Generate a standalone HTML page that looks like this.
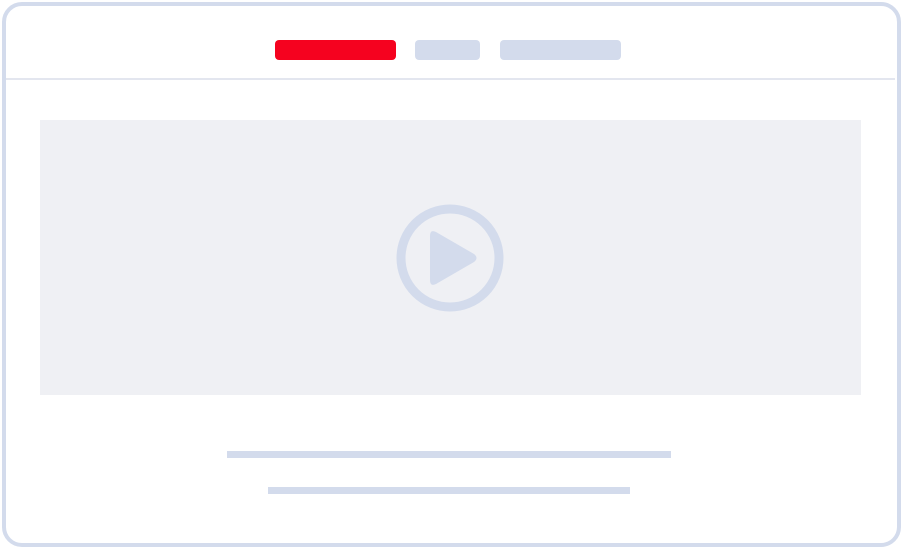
<!DOCTYPE html>
<html><head><meta charset="utf-8"><style>
html,body{margin:0;padding:0;background:#fff;}
body{width:901px;height:545px;position:relative;overflow:hidden;}
.frame{position:absolute;left:2px;top:2px;width:891px;height:537px;border:4px solid #d3dbec;border-radius:20px;background:#fff;}
.line{position:absolute;left:6px;right:6px;top:78px;height:2px;background:#e3e6ef;}
.b{position:absolute;border-radius:4px;}
.video{position:absolute;left:40px;top:120px;width:821px;height:275px;background:#eff0f4;}
.bar{position:absolute;height:7px;background:#d3dbec;}
</style></head><body>
<div class="frame"></div>
<div class="line"></div>
<div class="b" style="left:275px;top:40px;width:121px;height:20px;background:#f5021f;"></div>
<div class="b" style="left:415px;top:40px;width:65px;height:20px;background:#d3dbec;"></div>
<div class="b" style="left:500px;top:40px;width:121px;height:20px;background:#d3dbec;"></div>
<div class="video"></div>
<svg style="position:absolute;left:0;top:0" width="901" height="545">
<circle cx="450" cy="258" r="49" fill="none" stroke="#d3dbec" stroke-width="9"/>
<path d="M436 232 Q430 229 430 236 L430 280 Q430 287 436 284 L474 262 Q479 258 474 254 Z" fill="#d3dbec"/>
</svg>
<div class="bar" style="left:227px;top:451px;width:444px;"></div>
<div class="bar" style="left:268px;top:487px;width:362px;"></div>
</body></html>
